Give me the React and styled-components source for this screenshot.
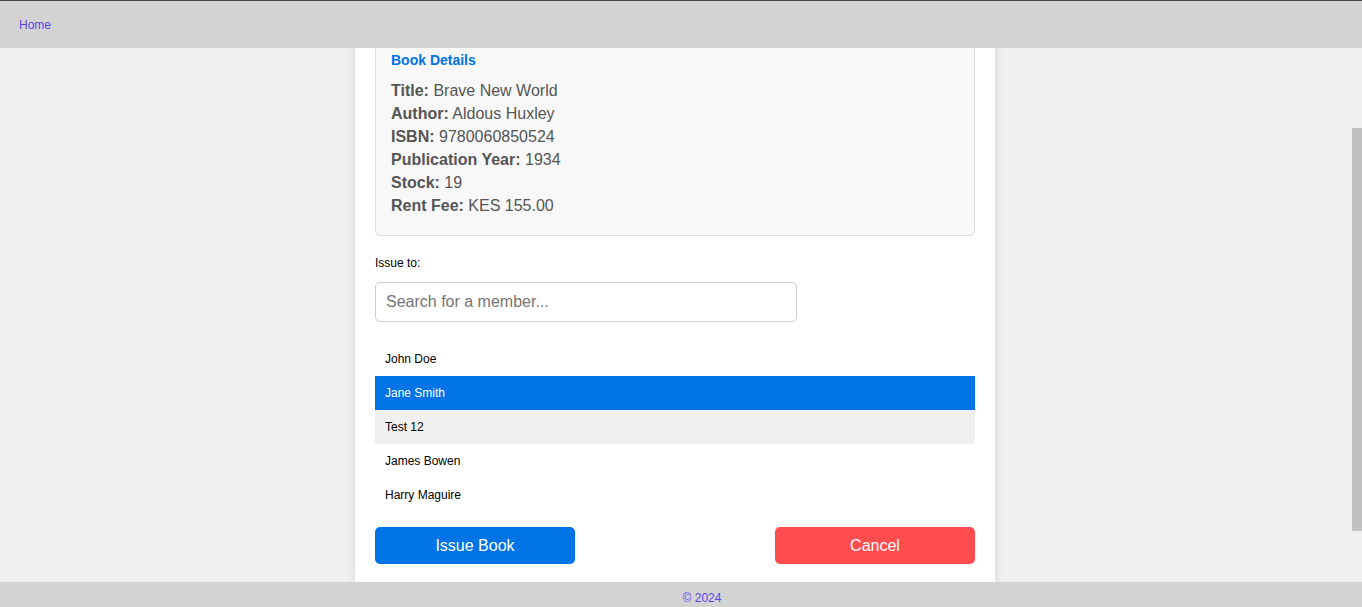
import React, { useLayoutEffect, useRef } from "react";
import styled, { createGlobalStyle } from "styled-components";

const GlobalStyle = createGlobalStyle`
  html, body { margin: 0; padding: 0; height: 100%; }
  body { font-family: "Liberation Sans", Arial, sans-serif; background: #f0f0f0; }
  #root { height: 100%; }
  * { box-sizing: border-box; }
`;

const Shell = styled.div`
  display: flex;
  flex-direction: column;
  height: 100vh;
`;

const Header = styled.header`
  flex: 0 0 48px;
  background: #d3d3d3;
  border-top: 1px solid #46464e;
  display: flex;
  align-items: center;
  padding-left: 19px;
`;

const NavLink = styled.a`
  color: #5a45ec;
  font-size: 12px;
  text-decoration: none;
`;

const Body = styled.div`
  flex: 1 1 auto;
  min-height: 0;
  display: flex;
`;

const Scroller = styled.main`
  flex: 1 1 auto;
  overflow-y: auto;
  background: #f0f0f0;
  padding: 20px 2px 66px 0;
  scrollbar-width: none;
  &::-webkit-scrollbar { display: none; }
`;

const ScrollRail = styled.div`
  flex: 0 0 10px;
  background: #f0f0f0;
  display: flex;
  flex-direction: column;
`;

const ScrollThumb = styled.div`
  margin-top: 80px;
  height: 403px;
  background: #c1c1c1;
`;

const Card = styled.section`
  width: 640px;
  margin: 0 auto;
  background: #fff;
  padding: 74px 20px 20px;
  box-shadow: 0 0 10px rgba(0, 0, 0, 0.1);
`;

const DetailsBox = styled.div`
  background: #f8f8f8;
  border: 1px solid #ddd;
  border-radius: 5px;
  padding: 13px 15px 18px;
  margin-bottom: 20px;
`;

const DetailsHeading = styled.h3`
  margin: 0 0 11px;
  font-size: 14px;
  line-height: 16px;
  color: #0073e6;
`;

const DetailLine = styled.p`
  margin: 0;
  font-size: 16px;
  line-height: 23px;
  color: #555;
  strong { font-weight: bold; }
`;

const Label = styled.label`
  display: block;
  font-size: 12px;
  line-height: 14px;
  color: #000;
  margin-bottom: 12px;
`;

const SearchInput = styled.input`
  display: block;
  width: 422px;
  height: 40px;
  padding: 0 10px;
  font-family: "Liberation Sans", Arial, sans-serif;
  font-size: 16px;
  border: 1px solid #ccc;
  border-radius: 5px;
  margin-bottom: 20px;
  outline: none;
  &::placeholder { color: #757575; }
`;

const MemberList = styled.ul`
  list-style: none;
  margin: 0 0 15px;
  padding: 0;
`;

const MemberItem = styled.li`
  height: 34px;
  display: flex;
  align-items: center;
  padding: 0 10px;
  font-size: 12px;
  color: ${(p) => (p.$selected ? "#fff" : "#000")};
  background: ${(p) => (p.$selected ? "#0073e6" : p.$hover ? "#f0f0f0" : "transparent")};
`;

const Actions = styled.div`
  display: flex;
  justify-content: space-between;
`;

const Button = styled.button`
  width: 200px;
  height: 37px;
  border: none;
  border-radius: 5px;
  color: #fff;
  font-family: "Liberation Sans", Arial, sans-serif;
  font-size: 16px;
  background: ${(p) => (p.$variant === "danger" ? "#ff4d4f" : "#0073e6")};
  cursor: pointer;
`;

const Footer = styled.footer`
  flex: 0 0 25px;
  background: #d3d3d3;
  display: flex;
  justify-content: center;
  padding: 9px 0 0 42px;
  font-size: 12px;
  line-height: 14px;
  color: #5a45ec;
`;

const details = [
  ["Title:", "Brave New World"],
  ["Author:", "Aldous Huxley"],
  ["ISBN:", "9780060850524"],
  ["Publication Year:", "1934"],
  ["Stock:", "19"],
  ["Rent Fee:", "KES 155.00"],
];

const members = ["John Doe", "Jane Smith", "Test 12", "James Bowen", "Harry Maguire"];

export default function App() {
  const ref = useRef(null);
  useLayoutEffect(() => {
    if (ref.current) ref.current.scrollTop = 104;
  }, []);
  return (
    <>
      <GlobalStyle />
      <Shell>
        <Header>
          <NavLink href="#">Home</NavLink>
        </Header>
        <Body>
          <Scroller ref={ref}>
            <Card>
              <DetailsBox>
                <DetailsHeading>Book Details</DetailsHeading>
                {details.map(([k, v]) => (
                  <DetailLine key={k}>
                    <strong>{k}</strong> {v}
                  </DetailLine>
                ))}
              </DetailsBox>
              <Label htmlFor="member">Issue to:</Label>
              <SearchInput id="member" placeholder="Search for a member..." />
              <MemberList>
                {members.map((m, i) => (
                  <MemberItem key={m} $selected={i === 1} $hover={i === 2}>
                    {m}
                  </MemberItem>
                ))}
              </MemberList>
              <Actions>
                <Button>Issue Book</Button>
                <Button $variant="danger">Cancel</Button>
              </Actions>
            </Card>
          </Scroller>
          <ScrollRail aria-hidden="true">
            <ScrollThumb />
          </ScrollRail>
        </Body>
        <Footer>© 2024</Footer>
      </Shell>
    </>
  );
}
